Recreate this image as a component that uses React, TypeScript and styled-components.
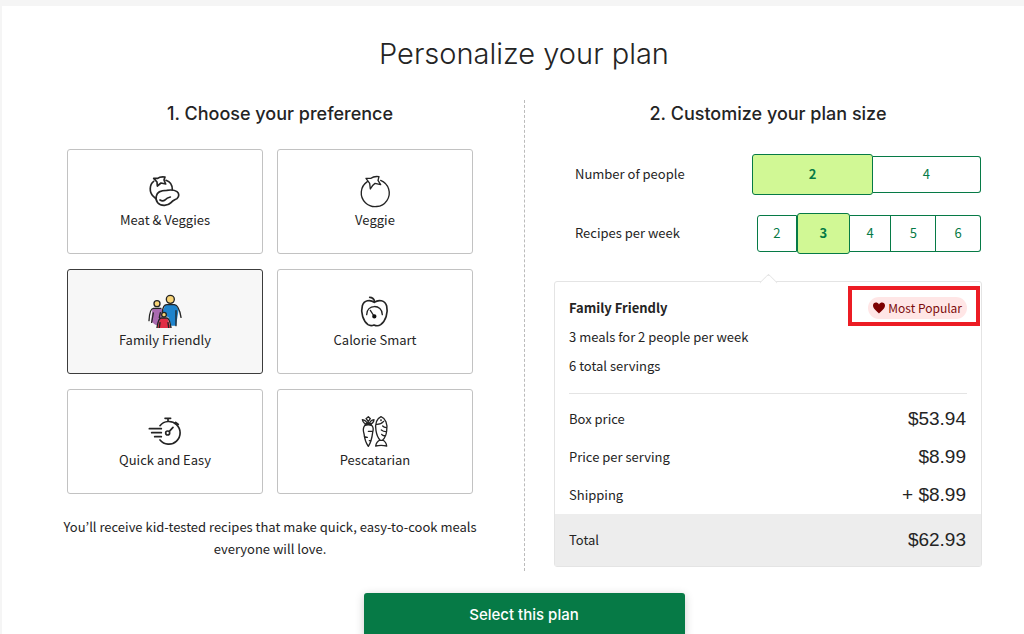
import React, { useState } from "react";
import styled, { createGlobalStyle } from "styled-components";

const sans = `"Source Sans Pro", "Noto Sans CJK KR", "Open Sans", sans-serif`;
const display = `Inter, "Liberation Sans", sans-serif`;
const green = "#067a46";
const ink = "#242424";

const GlobalStyle = createGlobalStyle`
  * { box-sizing: border-box; }
  body {
    margin: 0;
    background: #f5f5f5;
    color: ${ink};
    font: 13px/20px ${sans};
  }
  h1, h2, h3, p, dl, dd, fieldset { margin: 0; padding: 0; border: 0; }
`;

const Page = styled.div`
  height: 100vh;
  padding: 6px 0 0 2px;
  overflow: hidden;
`;

const Panel = styled.main`
  min-height: 100%;
  padding: 28px 12px 0 34px;
  background: #fff;
`;

const Title = styled.h1`
  font: 300 29px/40px ${display};
  text-align: center;
`;

const Columns = styled.div`
  display: grid;
  grid-template-columns: 1fr 1fr;
  margin-top: 26px;
`;

const Column = styled.section`
  min-height: 471px;

  & + & {
    padding: 0 30px 0 29px;
    border-left: 1px dashed #bbb;
  }
`;

const StepTitle = styled.h2`
  font: 500 18px/28px ${display};
  text-align: center;
`;

const CardGrid = styled.fieldset`
  display: grid;
  grid-template-columns: 1fr 1fr;
  gap: 15px 14px;
  margin: 21px 51px 0 31px;
`;

const HiddenRadio = styled.input`
  position: absolute;
  opacity: 0;
  pointer-events: none;
`;

const Card = styled.label<{ $selected: boolean }>`
  display: flex;
  flex-direction: column;
  align-items: center;
  gap: 2px;
  height: 105px;
  padding-top: 24px;
  border: 1px solid ${(p) => (p.$selected ? "#3c3c3c" : "#c2c2c2")};
  border-radius: 3px;
  background: ${(p) => (p.$selected ? "#f7f7f7" : "#fff")};
  cursor: pointer;
`;

const IconSvg = styled.svg<{ $stroke?: number }>`
  width: 34px;
  height: 34px;
  fill: none;
  stroke: #242424;
  stroke-width: ${(p) => p.$stroke ?? 4};
  stroke-linecap: round;
  stroke-linejoin: round;
`;

const Blurb = styled.p`
  margin: 22px 36px 0 16px;
  line-height: 22px;
  text-align: center;
`;

const Option = styled.div`
  display: flex;
  align-items: center;
  justify-content: space-between;
  height: 40px;
  padding: 0 1px 0 21px;
  margin-top: 19px;

  ${StepTitle} + & { margin-top: 26px; }
`;

const Segments = styled.fieldset<{ $width: number }>`
  display: flex;
  align-items: center;
  width: ${(p) => p.$width}px;
`;

const Segment = styled.label<{ $grow: number; $selected: boolean }>`
  display: flex;
  flex: ${(p) => p.$grow} 1 0;
  align-items: center;
  justify-content: center;
  height: ${(p) => (p.$selected ? 41 : 37)}px;
  border: 1px solid ${green};
  border-left-width: ${(p) => (p.$selected ? 1 : 0)}px;
  border-radius: ${(p) => (p.$selected ? "3px" : "0")};
  background: ${(p) => (p.$selected ? "#d1f895" : "#fff")};
  color: ${green};
  font-weight: ${(p) => (p.$selected ? 700 : 400)};
  cursor: pointer;

  &:first-of-type {
    border-left-width: 1px;
    border-top-left-radius: 3px;
    border-bottom-left-radius: 3px;
  }
  &:last-of-type {
    border-top-right-radius: 3px;
    border-bottom-right-radius: 3px;
  }
  &:has(+ & > input:checked) { border-right-width: 0; }
`;

const Summary = styled.section`
  position: relative;
  margin-top: 28px;
  border: 1px solid #e4e4e4;
  border-radius: 3px;

  &::before {
    content: "";
    position: absolute;
    top: -6px;
    left: 50%;
    width: 12px;
    height: 12px;
    margin-left: -6px;
    border: solid #e4e4e4;
    border-width: 1px 0 0 1px;
    border-radius: 3px 0 0 0;
    background: #fff;
    transform: rotate(45deg);
  }
`;

const SummaryHead = styled.div`
  display: flex;
  flex-direction: column;
  gap: 9px;
  margin: 0 14px;
  padding: 16px 0 17px;
  border-bottom: 1px solid #e4e4e4;
`;

const HeadRow = styled.div`
  display: flex;
  align-items: center;
  justify-content: space-between;
  height: 20px;
`;

const PlanName = styled.h3`
  font: 700 13px/20px ${sans};
`;

const Badge = styled.span`
  position: relative;
  display: flex;
  align-items: center;
  gap: 3px;
  height: 22px;
  padding: 0 5px;
  border-radius: 11px;
  background: #ffe6e6;
  color: #7d0c0c;
  font-size: 12px;

  &::after {
    content: "";
    position: absolute;
    inset: -11px -13px -7px -20px;
    border: 4px solid #ec1c24;
  }
`;

const HeartSvg = styled.svg`
  width: 12px;
  height: 12px;
  fill: #7d0000;
`;

const Prices = styled.dl`
  padding-top: 6px;
`;

const PriceRow = styled.div<{ $total?: boolean }>`
  display: flex;
  align-items: center;
  justify-content: space-between;
  height: ${(p) => (p.$total ? 52 : 38)}px;
  padding: 0 15px 0 14px;
  background: ${(p) => (p.$total ? "#ededed" : "transparent")};
`;

const Amount = styled.dd`
  font: 400 19px/24px "Liberation Sans", Arial, sans-serif;
`;

const SubmitButton = styled.button`
  display: block;
  width: 321px;
  height: 44px;
  margin: 22px auto 0;
  border: 0;
  border-radius: 3px;
  background: ${green};
  box-shadow: 0 2px 10px rgba(0, 0, 0, 0.2);
  color: #fff;
  font: 500 15px/20px ${display};
  cursor: pointer;
`;

const MeatIcon = () => (
  <IconSvg $stroke={5} viewBox="264 102 102 102" aria-hidden="true">
    <path d="M281 124C268 133 267 158 280 169Q284 174 288 176M318 121C330 125 337 137 337 149" />
    <path d="M281 115L293 115Q300 109 315 111L312 120L317 132L303 129L292 138L291 126Z" />
    <path d="M289 168C292 153 306 151 320 151C334 149 344 150 351 155C358 160 358 170 351 176C343 181 340 180 333 188C324 198 303 200 293 188C288 182 287 175 289 168Z" />
    <path d="M300 180Q308 185 315 180Q321 173 331 171" />
  </IconSvg>
);

const VeggieIcon = () => (
  <IconSvg viewBox="264 102 102 102" aria-hidden="true">
    <path d="M292 125A42 41 0 1 0 332 121" />
    <path d="M288 115L303 115Q311 108 327 110L324 121L332 134L315 130Q307 135 301 147L299 130Z" />
  </IconSvg>
);

const FamilyIcon = () => (
  <IconSvg viewBox="264 95 102 102" aria-hidden="true">
    <path fill="#a96ab0" stroke="none" d="M277 140H306L304 188Q288 194 274 177Z" />
    <path fill="#1e83cc" stroke="none" d="M316 127H348L356 142L348 190L334 190L325 165L305 154Z" />
    <path fill="#e12d45" stroke="none" d="M302 167H322L333 197H291Z" />
    <circle cx="331" cy="111" r="12" fill="#f8d477" />
    <circle cx="291" cy="124" r="9" fill="#f8d477" />
    <circle cx="312" cy="157" r="7" fill="#f8d477" />
    <path d="M267 175Q269 139 280 138H303M280 152L275 180M307 150Q309 127 320 127H343Q357 128 363 165M348 145V190M301 151L298 165M291 196Q295 168 303 167H321Q329 169 333 196M300 181L298 196M324 181L326 196" />
  </IconSvg>
);

const CalorieIcon = () => (
  <IconSvg $stroke={5} viewBox="264 95 102 102" aria-hidden="true">
    <path d="M314 118Q311 105 299 105M313 120C301 111 282 113 277 130C271 151 280 177 294 187Q302 192 312 188Q323 193 332 187C347 176 355 151 350 131C345 113 325 111 313 120Z" />
    <path strokeWidth="4" d="M290 157C289 125 337 124 337 157M301 144L312 161" />
    <circle cx="313" cy="162" r="4" fill="#111" stroke="#111" />
  </IconSvg>
);

const QuickIcon = () => (
  <IconSvg $stroke={5} viewBox="264 95 102 102" aria-hidden="true">
    <path d="M300 130A34 34 0 1 1 300 173M315 108H332M324 109V117M347 120L355 126M268 139H304M275 151H304M284 163H304M328 147L339 135" />
    <circle cx="323" cy="152" r="6" />
  </IconSvg>
);

const PescatarianIcon = () => (
  <IconSvg viewBox="264 95 102 102" aria-hidden="true">
    <path d="M284 130Q294 125 306 130Q312 137 308 150Q305 177 295 192Q285 179 282 154Q277 139 284 130ZM295 127L294 116L288 109L295 103L301 109L295 117M293 126Q288 113 277 112Q280 124 292 127M297 127Q301 113 312 112Q311 123 298 127M285 127L291 122L299 122L304 127M295 147H308M283 163L292 165M298 175H302" />
    <path d="M333 103C320 109 315 126 318 145Q321 164 330 173Q319 178 317 191Q333 187 350 191Q349 179 338 173Q348 164 350 146C354 125 346 108 333 103ZM321 126Q333 126 341 117M338 131Q342 135 349 136M334 143Q340 148 348 148M335 156Q339 161 344 160M327 174H341" />
    <circle cx="333" cy="114" r="1" />
  </IconSvg>
);

const preferences = [
  { label: "Meat & Veggies", Icon: MeatIcon },
  { label: "Veggie", Icon: VeggieIcon },
  { label: "Family Friendly", Icon: FamilyIcon },
  { label: "Calorie Smart", Icon: CalorieIcon },
  { label: "Quick and Easy", Icon: QuickIcon },
  { label: "Pescatarian", Icon: PescatarianIcon },
];

const peopleOptions = [
  { value: 2, grow: 120 },
  { value: 4, grow: 108 },
];

const recipeOptions = [
  { value: 2, grow: 39 },
  { value: 3, grow: 52 },
  { value: 4, grow: 42 },
  { value: 5, grow: 45 },
  { value: 6, grow: 45 },
];

interface SegmentedProps {
  name: string;
  label: string;
  width: number;
  options: { value: number; grow: number }[];
  value: number;
  onChange: (value: number) => void;
}

function Segmented({ name, label, width, options, value, onChange }: SegmentedProps) {
  return (
    <Option>
      <span id={`${name}-label`}>{label}</span>
      <Segments $width={width} aria-labelledby={`${name}-label`}>
        {options.map((o) => (
          <Segment key={o.value} $grow={o.grow} $selected={o.value === value}>
            <HiddenRadio
              type="radio"
              name={name}
              checked={o.value === value}
              onChange={() => onChange(o.value)}
            />
            {o.value}
          </Segment>
        ))}
      </Segments>
    </Option>
  );
}

export default function App() {
  const [preference, setPreference] = useState("Family Friendly");
  const [people, setPeople] = useState(2);
  const [recipes, setRecipes] = useState(3);

  return (
    <Page>
      <GlobalStyle />
      <Panel>
        <Title>Personalize your plan</Title>
        <Columns>
          <Column>
            <StepTitle>1. Choose your preference</StepTitle>
            <CardGrid aria-label="Preference">
              {preferences.map(({ label, Icon }) => (
                <Card key={label} $selected={label === preference}>
                  <HiddenRadio
                    type="radio"
                    name="preference"
                    checked={label === preference}
                    onChange={() => setPreference(label)}
                  />
                  <Icon />
                  {label}
                </Card>
              ))}
            </CardGrid>
            <Blurb>
              You’ll receive kid-tested recipes that make quick, easy-to-cook meals everyone will love.
            </Blurb>
          </Column>
          <Column>
            <StepTitle>2. Customize your plan size</StepTitle>
            <Segmented
              name="people"
              label="Number of people"
              width={229}
              options={peopleOptions}
              value={people}
              onChange={setPeople}
            />
            <Segmented
              name="recipes"
              label="Recipes per week"
              width={224}
              options={recipeOptions}
              value={recipes}
              onChange={setRecipes}
            />
            <Summary>
              <SummaryHead>
                <HeadRow>
                  <PlanName>{preference}</PlanName>
                  <Badge>
                    <HeartSvg viewBox="0 0 24 24" aria-hidden="true">
                      <path d="M12 23C9 19 0 14 0 7C0 0 9-1 12 5C15-1 24 0 24 7C24 14 15 19 12 23Z" />
                    </HeartSvg>
                    Most Popular
                  </Badge>
                </HeadRow>
                <p>{`${recipes} meals for ${people} people per week`}</p>
                <p>{`${recipes * people} total servings`}</p>
              </SummaryHead>
              <Prices>
                <PriceRow>
                  <dt>Box price</dt>
                  <Amount>$53.94</Amount>
                </PriceRow>
                <PriceRow>
                  <dt>Price per serving</dt>
                  <Amount>$8.99</Amount>
                </PriceRow>
                <PriceRow>
                  <dt>Shipping</dt>
                  <Amount>+ $8.99</Amount>
                </PriceRow>
                <PriceRow $total>
                  <dt>Total</dt>
                  <Amount>$62.93</Amount>
                </PriceRow>
              </Prices>
            </Summary>
          </Column>
        </Columns>
        <SubmitButton type="button">Select this plan</SubmitButton>
      </Panel>
    </Page>
  );
}
